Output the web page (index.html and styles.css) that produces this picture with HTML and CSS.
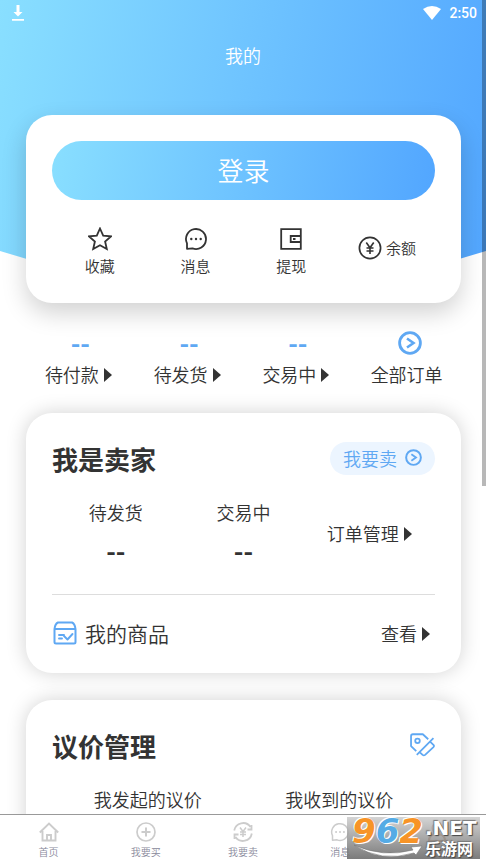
FILE: index.html
```html
<!DOCTYPE html>
<html lang="zh-CN">
<head>
<meta charset="utf-8">
<meta name="viewport" content="width=device-width, initial-scale=1">
<title>我的</title>
<link rel="stylesheet" href="styles.css">
</head>
<body>
<svg class="defs" aria-hidden="true">
  <symbol id="go" viewBox="0 0 24 24"><circle cx="12" cy="12" r="10.4" fill="none" stroke="currentColor" stroke-width="2.8"/><path d="M9 7.500l6.500 4.500L9 16.500" fill="none" stroke="currentColor" stroke-width="2.600"/></symbol>
  <symbol id="chat" viewBox="0 0 24 24"><path d="M3 16.400A10 10 0 1 1 8.500 21.400L3 21.800Z" fill="none" stroke="currentColor" stroke-width="1.800" stroke-linejoin="round"/><g fill="currentColor"><circle cx="7.300" cy="12" r="1.200"/><circle cx="12" cy="12" r="1.200"/><circle cx="16.700" cy="12" r="1.200"/></g></symbol>
</svg>

<main class="screen">
  <header class="hero">
    <div class="status">
      <svg class="status-download" viewBox="0 0 12 16"><path d="M4.500 0h3v7h3L6 11.500 1.500 7h3zM0 14h12v1.700H0z" fill="#fff"/></svg>
      <svg class="status-wifi" viewBox="0 0 18 14"><path d="M0 3Q9-3 18 3L9 14Z" fill="#fff"/></svg>
      <span class="status-time">2:50</span>
    </div>
    <h1 class="page-title">我的</h1>
  </header>

  <div class="content">
    <section class="card account">
      <button class="login" type="button">登录</button>
      <nav class="shortcuts">
        <a class="shortcut" href="#favorites">
          <svg class="icon" viewBox="0 0 24 24"><path d="M12 1.500l3.200 7.100 7.700.8-5.800 5.100 1.700 7.500L12 18.200 5.200 22l1.700-7.500-5.800-5.100 7.700-.8z" fill="none" stroke="currentColor" stroke-width="1.800"/></svg>
          <span>收藏</span>
        </a>
        <a class="shortcut" href="#messages">
          <svg class="icon"><use href="#chat"/></svg>
          <span>消息</span>
        </a>
        <a class="shortcut" href="#withdraw">
          <svg class="icon" viewBox="0 0 24 24"><path d="M2.200 2.200h19.600v19.600H2.200zM21.800 9H11.700v6h10.100" fill="none" stroke="currentColor" stroke-width="1.800"/><path d="M14 11h2.500v2H14z" fill="currentColor"/></svg>
          <span>提现</span>
        </a>
        <a class="shortcut balance" href="#balance">
          <svg class="icon" viewBox="0 0 24 24"><circle cx="12" cy="12" r="10.600" fill="none" stroke="currentColor" stroke-width="1.700"/><path d="M8.300 6.500l3.700 5.300 3.700-5.300M12 11.800V18M8.500 12h7M8.500 15h7" fill="none" stroke="currentColor" stroke-width="1.600"/></svg>
          <span>余额</span>
        </a>
      </nav>
    </section>

    <nav class="orders">
      <a class="order" href="#unpaid"><b class="count">--</b><span class="more shifted">待付款</span></a>
      <a class="order" href="#unshipped"><b class="count">--</b><span class="more shifted">待发货</span></a>
      <a class="order" href="#trading"><b class="count">--</b><span class="more shifted">交易中</span></a>
      <a class="order" href="#orders"><span class="count all"><svg class="icon"><use href="#go"/></svg></span><span>全部订单</span></a>
    </nav>

    <section class="card seller">
      <div class="card-head">
        <h2>我是卖家</h2>
        <a class="pill" href="#sell">我要卖<svg class="pill-icon"><use href="#go"/></svg></a>
      </div>
      <div class="cells three">
        <a class="cell" href="#to-ship"><span>待发货</span><b>--</b></a>
        <a class="cell" href="#in-trade"><span>交易中</span><b>--</b></a>
        <a class="cell centered" href="#manage"><span class="more shifted">订单管理</span></a>
      </div>
      <div class="goods">
        <svg class="goods-icon" viewBox="0 0 24 24" fill="none" stroke="currentColor" stroke-width="2" stroke-linejoin="round"><path d="M1.500 8Q2 3 5 1.500h14Q22 3 22.500 8v13q0 1.500-1.500 1.500H3Q1.500 22.500 1.500 21zM1.500 8h21"/><path d="M6 14h5M6 17.500h3M11 15l3.500 3.500 5-5.500" stroke-width="1.900" stroke-linecap="round"/></svg>
        <span class="goods-name">我的商品</span>
        <a class="more view" href="#goods">查看</a>
      </div>
    </section>

    <section class="card bargains">
      <div class="card-head">
        <h2>议价管理</h2>
        <svg class="tag-icon" viewBox="0 0 24 24" fill="none" stroke="currentColor" stroke-width="1.700" stroke-linejoin="round"><path d="M6 17.500L1 12.500V3q0-1.800 1.800-1.800h9.500L17.500 6"/><circle cx="7.200" cy="7.500" r="2.200"/><path d="M6.500 21L22.500 5M19.500 8.500l3 3q1 1 0 2L14.500 21q-1.200 1-2.400 0L9.500 18.500"/></svg>
      </div>
      <div class="cells two">
        <a class="cell" href="#bids-sent"><span>我发起的议价</span></a>
        <a class="cell" href="#bids-received"><span>我收到的议价</span></a>
      </div>
    </section>
  </div>
</main>

<nav class="tabs">
  <a class="tab" href="#home"><svg viewBox="0 0 20 20" fill="none" stroke="currentColor" stroke-width="1.900"><path d="M.8 10.500L10 1.500l9.200 9M3.500 9v9.500h13V9M8 18.500V13h4v5.500"/></svg><span>首页</span></a>
  <a class="tab" href="#buy"><svg viewBox="0 0 20 20" fill="none" stroke="currentColor" stroke-width="1.700"><circle cx="10" cy="10" r="9"/><path d="M10 5.500v9M5.500 10h9" stroke-width="2"/></svg><span>我要买</span></a>
  <a class="tab" href="#sell"><svg viewBox="0 0 20 20" fill="none" stroke="currentColor" stroke-width="1.800"><path d="M1.200 8.500A9 9 0 0 1 17.500 5M18.800 11.500A9 9 0 0 1 2.500 15M18.500 3v4.500h-4M1.500 17v-4.500h4"/><path d="M7 5.500l3 4 3-4M10 9.500V15M7 10h6M7 12.500h6" stroke-width="1.500"/></svg><span>我要卖</span></a>
  <a class="tab" href="#messages"><svg><use href="#chat"/></svg><span>消息</span></a>
  <a class="tab current" href="#me"><svg viewBox="0 0 20 20" fill="none" stroke="currentColor" stroke-width="2"><circle cx="10" cy="6" r="4.500"/><path d="M2 19q0-7 8-7t8 7z"/></svg><span>我的</span></a>
</nav>

<aside class="watermark">
  <svg class="swoosh" viewBox="0 0 133 42"><path d="M7 28Q36 41 66 33L64 30 75 29 69 38 67 36Q34 46 7 28Z" fill="#fff" stroke="#777" stroke-width=".6"/></svg>
  <span class="mark-number"><i>9</i><i class="blue">6</i><i>2</i></span>
  <span class="mark-text"><span class="mark-net">.NET</span><span class="mark-name">乐游网</span></span>
</aside>
<div class="scroll-thumb"></div>
</body>
</html>
```
FILE: styles.css
```css
* { box-sizing: border-box; }

body {
  display: flex;
  flex-direction: column;
  height: 100vh;
  margin: 0;
  overflow: hidden;
  background: #fff;
  color: #333;
  font: 350 18px/30px "Noto Sans CJK SC", sans-serif;
}

a { color: inherit; text-decoration: none; }
b { font-weight: 700; }
h1, h2 { margin: 0; }
svg { display: block; flex: none; }
.defs { display: none; }

.screen { flex: 1; min-height: 0; overflow: hidden; }

.hero {
  height: 290px;
  margin-bottom: -175px;
  background: linear-gradient(100deg, #89dfff, #52a6ff);
  clip-path: polygon(0 0, 100% 0, 100% 251px, 80% 280px, 50% 100%, 20% 280px, 0 251px);
  color: #fff;
}

.status {
  display: flex;
  align-items: center;
  height: 26px;
  padding: 0 9px 0 12px;
}
.status-download { width: 12px; height: 16px; }
.status-wifi { width: 18px; height: 14px; margin-left: auto; }
.status-time { margin-left: 8px; font: 500 14px/26px Roboto, sans-serif; }

.page-title {
  font-size: 18px;
  font-weight: 350;
  line-height: 58px;
  text-align: center;
}

.content { position: relative; padding: 0 25px 0 26px; }

.card {
  margin-bottom: 27px;
  padding: 26px 26px 0;
  border-radius: 26px;
  background: #fff;
  box-shadow: 0 0 20px rgba(0, 0, 0, .18);
}

.account {
  margin-bottom: 0;
  padding-bottom: 24px;
  box-shadow: 0 10px 24px rgba(0, 0, 0, .18);
}
.bargains { padding-bottom: 60px; }

.login {
  display: block;
  width: 100%;
  height: 59px;
  margin-bottom: 27px;
  padding: 0 0 2px;
  border: 0;
  border-radius: 30px;
  background: linear-gradient(100deg, #89dfff, #52a6ff);
  color: #fff;
  font: 350 26px/57px "Noto Sans CJK SC", sans-serif;
}

.shortcuts { display: grid; grid-template-columns: repeat(4, 1fr); }
.shortcut {
  display: flex;
  flex-direction: column;
  align-items: center;
  gap: 4px;
  height: 52px;
  font-size: 15px;
  line-height: 22px;
}
.balance {
  flex-direction: row;
  justify-content: center;
  height: 42px;
}
.icon { width: 24px; height: 24px; }

.orders {
  display: grid;
  grid-template-columns: repeat(4, 1fr);
  padding: 26px 0 24px;
}
.order { display: flex; flex-direction: column; align-items: center; }
.count {
  height: 30px;
  color: #5fa8f3;
  font-size: 26px;
  line-height: 26px;
}
.all { padding: 2px 0 0 6px; }

.more::after {
  display: inline-block;
  margin-left: 5px;
  border: solid transparent;
  border-width: 7px 0 7px 8px;
  border-left-color: #333;
  content: "";
}
.shifted { margin-right: 4px; }

.card-head {
  display: flex;
  align-items: center;
  justify-content: space-between;
  height: 39px;
}
.card-head h2 { font-size: 26px; line-height: 38px; }

.pill {
  display: flex;
  align-items: center;
  gap: 8px;
  height: 33px;
  padding: 0 13px 2px;
  border-radius: 17px;
  background: #ecf5ff;
  color: #5fa8f3;
}
.pill-icon { width: 17px; height: 17px; }

.cells { display: grid; margin-top: 15px; line-height: 38px; }
.three { grid-template-columns: repeat(3, 1fr); height: 80px; }
.two { grid-template-columns: repeat(2, 1fr); }
.cell {
  display: flex;
  flex-direction: column;
  align-items: center;
}
.centered { justify-content: center; }
.cell b { font-size: 26px; }

.goods {
  display: flex;
  align-items: center;
  height: 79px;
  margin-top: 21px;
  padding-bottom: 2px;
  border-top: 1px solid #ddd;
}
.goods-icon { width: 24px; height: 24px; margin: 0 8px 0 1px; color: #5fa8f3; }
.goods-name { font-size: 21px; }
.view { margin: 0 5px 0 auto; }
.tag-icon { width: 25px; height: 25px; color: #5fa8f3; }

.tabs {
  position: relative;
  display: grid;
  flex: none;
  grid-template-columns: repeat(5, 1fr);
  height: 51px;
  padding-top: 7px;
  border-top: 1px solid #999;
  background: #fff;
}
.tab {
  display: flex;
  flex-direction: column;
  align-items: center;
  gap: 3px;
  color: #ccc;
  font-size: 10px;
  line-height: 14px;
}
.tab svg { width: 20px; height: 20px; }
.tab span { color: #88889a; }
.current, .current span { color: #b5652b; }

.watermark {
  position: absolute;
  right: 6px;
  bottom: 6px;
  display: flex;
  gap: 2px;
  width: 133px;
  height: 42px;
  padding-left: 5px;
  background: linear-gradient(rgba(205, 205, 205, .85), rgba(105, 105, 105, .88));
  color: #fff;
}
.swoosh { position: absolute; inset: 0; width: 133px; height: 42px; }
.mark-number {
  color: #f79427;
  font: 700 34px/28px "DejaVu Sans", sans-serif;
  text-shadow: 1px 1px #fff, -1px -1px #fff;
}
.mark-number .blue { color: #55abe5; }
.mark-text {
  display: flex;
  flex-direction: column;
  text-shadow: 1px 1px 1px #444, -1px -1px 1px #777;
}
.mark-net { font: 700 20px/23px "DejaVu Sans", sans-serif; }
.mark-name { font-size: 16px; font-weight: 700; line-height: 16px; }

.scroll-thumb {
  position: absolute;
  top: 0;
  right: 0;
  width: 4px;
  height: 486px;
  background: rgba(0, 0, 0, .28);
}
```
